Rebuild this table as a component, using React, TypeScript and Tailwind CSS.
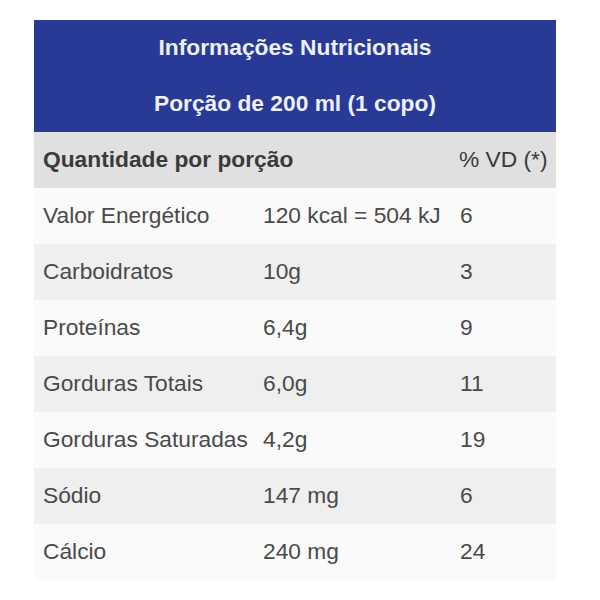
import React from "react";

const rows: [string, string, string][] = [
  ["Valor Energético", "120 kcal = 504 kJ", "6"],
  ["Carboidratos", "10g", "3"],
  ["Proteínas", "6,4g", "9"],
  ["Gorduras Totais", "6,0g", "11"],
  ["Gorduras Saturadas", "4,2g", "19"],
  ["Sódio", "147 mg", "6"],
  ["Cálcio", "240 mg", "24"],
];

export default function App() {
  return (
    <div className="w-[600px] h-[600px] bg-white pt-[20px] pl-[34px]" style={{ fontFamily: '"Liberation Sans", Arial, sans-serif' }}>
      <div className="w-[522px]">
        <div className="bg-[#283a96] text-[#eef0f8] font-bold text-[22.75px] text-center">
          <div className="h-[56px] flex items-center justify-center pb-[2px]">Informações Nutricionais</div>
          <div className="h-[56px] flex items-center justify-center pb-[2px]">Porção de 200 ml (1 copo)</div>
        </div>
        <div className="grid grid-cols-[229px_196px_1fr] h-[56px] items-center bg-[#e0e0e0] text-[#3a3a3a] font-bold text-[22.75px] pb-[2px]">
          <div className="col-span-2 pl-[9px]">Quantidade por porção</div>
          <div className="font-normal whitespace-nowrap">% VD (*)</div>
        </div>
        {rows.map((r, i) => (
          <div
            key={i}
            className={`grid grid-cols-[229px_196px_1fr] h-[56px] items-center text-[#4a4a4a] text-[22.75px] pb-[2px] ${i % 2 === 0 ? "bg-[#fafafa]" : "bg-[#efefef]"}`}
          >
            <div className="pl-[9px] whitespace-nowrap">{r[0]}</div>
            <div className="whitespace-nowrap">{r[1]}</div>
            <div className="pl-[1px]">{r[2]}</div>
          </div>
        ))}
      </div>
    </div>
  );
}
